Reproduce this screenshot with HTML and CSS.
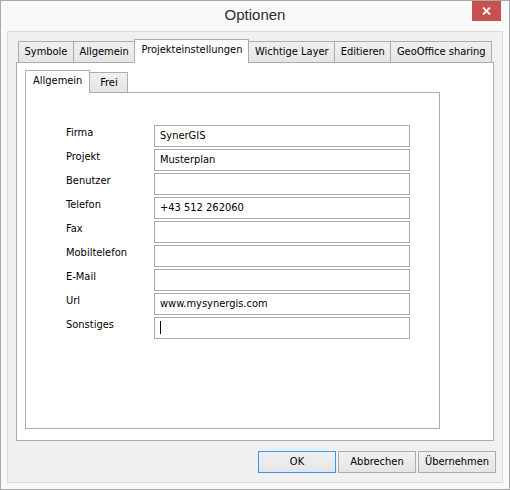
FILE: index.html
```html
<!DOCTYPE html>
<html lang="de">

<head>
	<meta charset="utf-8">
	<title>Optionen</title>
	<link rel="stylesheet" href="styles.css">
</head>

<body>
	<div class="window">
		<div class="titlebar">
			<span></span>
			<span class="title">Optionen</span>
			<span class="close">
				<svg width="9" height="8" viewBox="0 0 9 8">
					<path d="M1 0.5 L8 7.5 M8 0.5 L1 7.5" stroke="#fff" stroke-width="1.8" fill="none"/>
				</svg>
			</span>
		</div>

		<div class="client">
			<div class="tabs outer">
				<div class="tabstrip">
					<span class="tab">Symbole</span>
					<span class="tab">Allgemein</span>
					<span class="tab active">Projekteinstellungen</span>
					<span class="tab">Wichtige Layer</span>
					<span class="tab">Editieren</span>
					<span class="tab">GeoOffice sharing</span>
				</div>
				<div class="tabpage">
					<div class="tabs inner">
						<div class="tabstrip">
							<span class="tab active">Allgemein</span>
							<span class="tab">Frei</span>
						</div>
						<div class="tabpage">
							<div class="form">
								<span class="lbl">Firma</span>
								<span class="field">SynerGIS</span>
								<span class="lbl">Projekt</span>
								<span class="field">Musterplan</span>
								<span class="lbl">Benutzer</span>
								<span class="field"></span>
								<span class="lbl">Telefon</span>
								<span class="field">+43 512 262060</span>
								<span class="lbl">Fax</span>
								<span class="field"></span>
								<span class="lbl">Mobiltelefon</span>
								<span class="field"></span>
								<span class="lbl">E-Mail</span>
								<span class="field"></span>
								<span class="lbl">Url</span>
								<span class="field">www.mysynergis.com</span>
								<span class="lbl">Sonstiges</span>
								<span class="field"><span class="caret"></span></span>
							</div>
						</div>
					</div>
				</div>
			</div>

			<div class="buttons">
				<span class="btn default">OK</span>
				<span class="btn">Abbrechen</span>
				<span class="btn">Übernehmen</span>
			</div>
		</div>
	</div>
</body>

</html>
```

FILE: styles.css
```css
* {
	box-sizing:border-box;
}

body {
	margin:0;
	font-family:"DejaVu Sans Condensed", "Liberation Sans", sans-serif;
	font-size:11px;
	color:black;
}

.window {
	width:510px;
	height:490px;
	border:1px solid #aaaaaa;
	background-color:#f9f9f9;
	display:flex;
	flex-direction:column;
}

/* title bar */
.titlebar {
	height:30px;
	display:grid;
	grid-template-columns:1fr auto 1fr;
	align-items:start;
}

.title {
	font-family:"Liberation Sans", sans-serif;
	font-size:15px;
	color:#2b2b2b;
	padding-top:5px;
}

.close {
	justify-self:end;
	margin-right:8px;
	width:29px;
	height:20px;
	background-color:#c75050;
	display:flex;
	align-items:center;
	justify-content:center;
}

/* client area */
.client {
	flex:1;
	margin:0 6px 6px 6px;
	border:1px solid #dadada;
	background-color:#f0f0f0;
	padding:7px 6px 9px 8px;
	display:flex;
	flex-direction:column;
}

.tabs {
	display:flex;
	flex-direction:column;
}

.tabs.outer {
	flex:1;
	margin-right:2px;
}

.tabstrip {
	display:flex;
	align-items:flex-end;
}

.tab {
	border:1px solid #acacac;
	border-bottom:none;
	background:linear-gradient(#f0f0f0, #e5e5e5);
	white-space:nowrap;
	text-align:center;
}

.tab + .tab {
	margin-left:-1px;
}

.tab.active {
	background:white;
	position:relative;
	z-index:1;
	margin-bottom:-1px;
}

.outer > .tabstrip {
	padding-left:2px;
}

.outer > .tabstrip .tab {
	height:21px;
	line-height:19px;
	padding:0 5.5px;
}

.outer > .tabstrip .tab.active {
	height:24px;
	line-height:20px;
	padding:0 6px;
}

.tabpage {
	border:1px solid #acacac;
	background-color:white;
}

.outer > .tabpage {
	flex:1;
	padding:7px 0 11px 8px;
}

.tabs.inner {
	width:415px;
	height:100%;
}

.inner > .tabstrip .tab {
	height:20px;
	line-height:19px;
	padding:0 7px;
	min-width:39px;
}

.inner > .tabstrip .tab.active {
	height:23px;
	line-height:19px;
}

.inner > .tabpage {
	flex:1;
	padding:32px 0 0 40px;
}

/* form */
.form {
	display:grid;
	grid-template-columns:88px 256px;
	grid-auto-rows:22px;
	row-gap:2px;
}

.lbl {
	line-height:15px;
	white-space:nowrap;
}

.field {
	border:1px solid #ababab;
	line-height:20px;
	padding-left:5px;
	white-space:nowrap;
}

.caret {
	display:inline-block;
	width:1px;
	height:13px;
	background-color:black;
	vertical-align:-3px;
}

/* dialog buttons */
.buttons {
	display:flex;
	justify-content:flex-end;
	gap:2px;
	margin-top:10px;
}

.btn {
	width:78px;
	height:22px;
	line-height:20px;
	text-align:center;
	border:1px solid #acacac;
	background:linear-gradient(#f0f0f0, #e5e5e5);
}

.btn.default {
	border-color:#3399ff;
}
```
